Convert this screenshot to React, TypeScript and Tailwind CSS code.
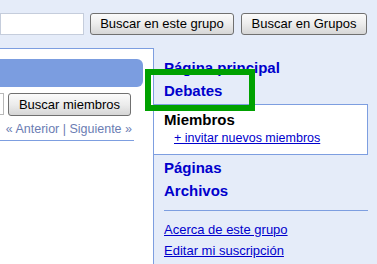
const font = { fontFamily: '"Liberation Sans", Arial, sans-serif' };

function XpButton({ label, className }: { label: string; className: string }) {
  return (
    <button
      className={`flex items-center justify-center rounded-[3px] border border-[#707070] bg-gradient-to-b from-[#fbfbfb] via-[#ececec] to-[#d6d6d6] text-[13px] text-black ${className}`}
    >
      {label}
    </button>
  );
}

export default function App() {
  return (
    <div className="relative h-[264px] w-[377px] overflow-hidden bg-[#e5ecf9]" style={font}>
      {/* barra de busca */}
      <div className="flex h-[48px] items-start pt-[13px]">
        <input className="h-[22px] w-[84px] border border-[#c5cddc] bg-white" />
        <XpButton label="Buscar en este grupo" className="ml-[6px] h-[22px] w-[144px]" />
        <XpButton label="Buscar en Grupos" className="ml-[7px] h-[22px] w-[126px]" />
      </div>

      <div className="flex">
        {/* coluna principal */}
        <div className="h-[216px] w-[154px] border-r border-t border-[#7d9ee0] bg-white">
          <div className="mr-[10px] mt-[10px] h-[28px] rounded-r-[6px] bg-[#7b9de0]" />
          <div className="mt-[6px] flex h-[22px]">
            <div className="h-[22px] w-[4px] border border-l-0 border-[#b8b8b8] bg-white" />
            <XpButton label="Buscar miembros" className="ml-[4px] h-[23px] w-[123px] text-[13.5px]" />
          </div>
          <div className="mt-[6px] w-[134px] border-b border-[#7d9ee0] pb-[3px] pr-[2px] text-right text-[12.5px] leading-[16px] text-[#6b7db3]">
            « Anterior | Siguiente »
          </div>
        </div>

        {/* navegação */}
        <div className="flex-1 pt-[8px]">
          <div className="pl-[10px] text-[15px] font-bold leading-[23px] text-[#0000cc]">
            <div>Página principal</div>
            <div>Debates</div>
          </div>
          <div className="-ml-px mr-[9px] mt-[2px] h-[51px] border border-[#7d9ee0] bg-white pl-[10px] pt-[5px]">
            <div className="text-[15px] font-bold leading-[20px] text-black">Miembros</div>
            <div className="ml-[10px] text-[12.5px] leading-[16px] text-[#0000cc] underline">
              + invitar nuevos miembros
            </div>
          </div>
          <div className="pl-[10px] pt-[1px] text-[15px] font-bold leading-[23px] text-[#0000cc]">
            <div>Páginas</div>
            <div>Archivos</div>
          </div>
          <div className="ml-[10px] mr-[9px] mt-[8px] border-t border-[#7d9ee0]" />
          <div className="pl-[10px] pt-[8px] text-[13px] leading-[21px] text-[#0000cc] underline">
            <div>Acerca de este grupo</div>
            <div>Editar mi suscripción</div>
          </div>
        </div>
      </div>

      {/* destaque verde */}
      <div className="absolute left-[145px] top-[69px] h-[42px] w-[110px] border-[6px] border-[#00a100]" />
    </div>
  );
}
